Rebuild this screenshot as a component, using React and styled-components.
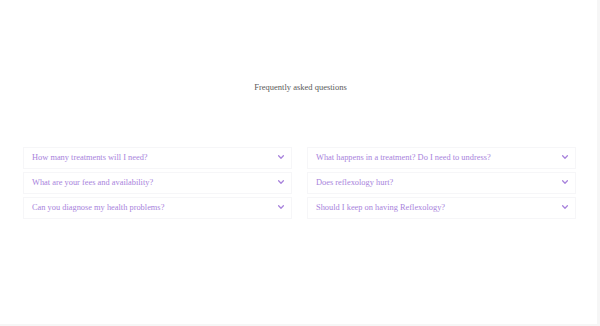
import styled, { createGlobalStyle } from "styled-components";

const GlobalStyle = createGlobalStyle`
  html, body {
    margin: 0;
    padding: 0;
    background: #f6f6f6;
  }
`;

const Page = styled.section`
  width: 597px;
  height: 324px;
  background: #fff;
  box-sizing: border-box;
  padding: 80px 21px 0 23px;
  font-family: "Liberation Serif", "Times New Roman", Times, serif;
`;

const Title = styled.h2`
  margin: 0;
  font-weight: normal;
  font-size: 8.5px;
  line-height: 14px;
  color: #5a5a5a;
  text-align: center;
  padding-left: 2px;
`;

const Grid = styled.div`
  display: grid;
  grid-template-columns: 269px 269px;
  column-gap: 15px;
  margin-top: 53px;
`;

const Column = styled.div`
  display: flex;
  flex-direction: column;
  gap: 3px;
`;

const Item = styled.div`
  height: 22px;
  box-sizing: border-box;
  border: 1px solid #f6f6f8;
  display: flex;
  align-items: center;
  justify-content: space-between;
  padding: 0 6px 1px 8px;
  color: #a883dc;
  font-size: 8.4px;
`;

const Chevron = styled.svg`
  width: 8px;
  height: 8px;
  margin-top: -1px;
`;

const Arrow = () => (
  <Chevron viewBox="0 0 10 10" fill="none" stroke="#a883dc" strokeWidth="1.6" strokeLinecap="round" strokeLinejoin="round">
    <path d="M2 3.5 L5 6.5 L8 3.5" />
  </Chevron>
);

const left = [
  "How many treatments will I need?",
  "What are your fees and availability?",
  "Can you diagnose my health problems?",
];

const right = [
  "What happens in a treatment? Do I need to undress?",
  "Does reflexology hurt?",
  "Should I keep on having Reflexology?",
];

const App = () => {
  return (
    <>
      <GlobalStyle />
      <Page>
        <Title>Frequently asked questions</Title>
        <Grid>
          <Column>
            {left.map((q) => (
              <Item key={q}>
                {q}
                <Arrow />
              </Item>
            ))}
          </Column>
          <Column>
            {right.map((q) => (
              <Item key={q}>
                {q}
                <Arrow />
              </Item>
            ))}
          </Column>
        </Grid>
      </Page>
    </>
  );
};

export default App;
